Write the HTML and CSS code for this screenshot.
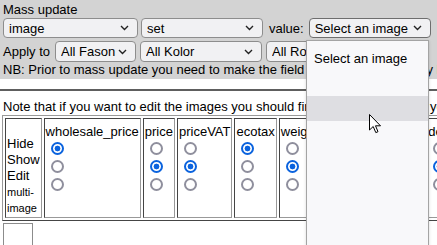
FILE: index.html
```html
<!DOCTYPE html>
<html lang="en">
  <head>
    <meta charset="utf-8">
    <title>Mass update</title>
    <link rel="stylesheet" href="styles.css">
  </head>
  <body>
    <div class="mass">
      <div class="line">Mass update</div>
      <div class="row first">
        <select class="sel w-field"><option>image</option></select>
        <select class="sel w-mid"><option>set</option></select>
        <span class="label">value:</span>
        <select class="sel w-value"><option>Select an image</option></select>
      </div>
      <div class="row second">
        <span>Apply to</span>
        <select class="sel w-fason"><option>All Fason</option></select>
        <select class="sel w-mid"><option>All Kolor</option></select>
        <select class="sel w-mid"><option>All Rodzaj</option></select>
      </div>
      <div class="line">NB: Prior to mass update you need to make the field editable in the display below by selecting Edit.</div>
    </div>
    <div class="rule"></div>
    <p class="note">Note that if you want to edit the images you should first save the form and you will then see an Edit link.</p>
    <table class="fields">
      <tr>
        <td class="modes">&nbsp;<br>Hide<br>Show<br>Edit<br><small>multi-</small><br><small>image</small></td>
        <td class="col">wholesale_price<br><input type="radio" name="f1" checked><br><input type="radio" name="f1"><br><input type="radio" name="f1"></td>
        <td class="col">price<br><input type="radio" name="f2"><br><input type="radio" name="f2" checked><br><input type="radio" name="f2"></td>
        <td class="col">priceVAT<br><input type="radio" name="f3"><br><input type="radio" name="f3" checked><br><input type="radio" name="f3"></td>
        <td class="col">ecotax<br><input type="radio" name="f4" checked><br><input type="radio" name="f4"><br><input type="radio" name="f4"></td>
        <td class="col">weight<br><input type="radio" name="f5"><br><input type="radio" name="f5" checked><br><input type="radio" name="f5"></td>
        <td class="col">height<br><input type="radio" name="f6"><br><input type="radio" name="f6" checked><br><input type="radio" name="f6"></td>
        <td class="col">unit_price<br><input type="radio" name="f7"><br><input type="radio" name="f7" checked><br><input type="radio" name="f7"></td>
        <td class="col">description<br><input type="radio" name="f8"><br><input type="radio" name="f8" checked><br><input type="radio" name="f8"></td>
      </tr>
    </table>
    <div class="thumb"></div>

    <div class="popup">
      <div class="opt">Select an image</div>
      <div class="opt"></div>
      <div class="opt hover"></div>
    </div>
    <svg class="cursor" width="13" height="20" viewBox="0 0 13 20">
      <path d="M0.5 0.5 L0.5 16 L4.2 12.5 L6.8 18.6 L9 17.7 L6.5 11.8 L11.5 11.8 Z" fill="#fff" stroke="#000" stroke-width="1" stroke-linejoin="round"/>
    </svg>
  </body>
</html>
```

FILE: styles.css
```css
html, body {
  margin: 0px;
  padding: 0px;
  overflow: hidden;
  background: white;
  font-family: "Liberation Sans", Arial, sans-serif;
  font-size: 13px;
  color: black;
  white-space: nowrap;
}
.mass {
  background: #d3d3d3;
  padding: 2px 3px 0px 3px;
  height: 77px;
}
.line {
  line-height: 15px;
}
.row {
  display: flex;
  align-items: center;
  gap: 3px;
}
.row.first {
  margin-top: 1px;
}
.row.second {
  margin-top: 3px;
  gap: 4px;
}
.row.second span {
  margin-right: 1px;
}
.label {
  margin: 0px 2px 0px 3px;
}
.sel {
  appearance: none;
  -webkit-appearance: none;
  box-sizing: border-box;
  height: 20px;
  margin: 0px;
  padding: 0px 18px 0px 5px;
  font-family: "Liberation Sans", Arial, sans-serif;
  font-size: 13px;
  color: black;
  background-color: #f1f1f3;
  background-image: url("data:image/svg+xml,%3Csvg xmlns='http://www.w3.org/2000/svg' width='9' height='6' viewBox='0 0 9 6'%3E%3Cpath d='M1 1 L4.5 4.5 L8 1' fill='none' stroke='%23222' stroke-width='1.4'/%3E%3C/svg%3E");
  background-repeat: no-repeat;
  background-position: right 8px center;
  border: 1px solid #8d8d8d;
  border-radius: 4px;
}
.w-field { width: 135px; }
.w-mid { width: 122px; }
.w-value { width: 122px; border-color: #6e6e6e; }
.w-fason { width: 81px; }
.second .sel { height: 21px; }
.rule {
  margin-top: 10px;
  border-top: 2px solid #5e5e5e;
}
.note {
  margin: 8px 0px 0px 3px;
  line-height: 15px;
}
.fields {
  margin: 1px 0px 0px 2px;
  border: 1px outset #999;
  border-spacing: 2px;
}
.fields td {
  border: 1px inset #999;
  padding: 1px;
  vertical-align: top;
}
.modes {
  line-height: 16px;
}
.modes small {
  font-size: 11px;
}
.col {
  padding-top: 5px !important;
  line-height: 15px;
}
.col input {
  appearance: none;
  -webkit-appearance: none;
  box-sizing: border-box;
  width: 13px;
  height: 13px;
  margin: 3px 3px 2px 5px;
  vertical-align: middle;
  border: 2px solid #8f8f9d;
  border-radius: 50%;
  background: white;
}
.col input:checked {
  border-color: #0b63de;
  background: radial-gradient(circle, #0b63de 0px, #0b63de 2.6px, white 3.2px);
}
.thumb {
  margin: 2px 0px 0px 3px;
  width: 28px;
  height: 40px;
  border: 1px solid #8c8c8c;
}
.popup {
  position: absolute;
  left: 306px;
  top: 40px;
  width: 121px;
  height: 220px;
  padding-top: 5px;
  background: #f8f8fa;
  border: 1px solid #a4a4a4;
  box-shadow: 0px 1px 3px rgba(0, 0, 0, 0.15);
}
.opt {
  height: 25px;
  line-height: 25px;
  padding-left: 7px;
}
.opt.hover {
  background: #dedee2;
}
.cursor {
  position: absolute;
  left: 369px;
  top: 114px;
}
```
